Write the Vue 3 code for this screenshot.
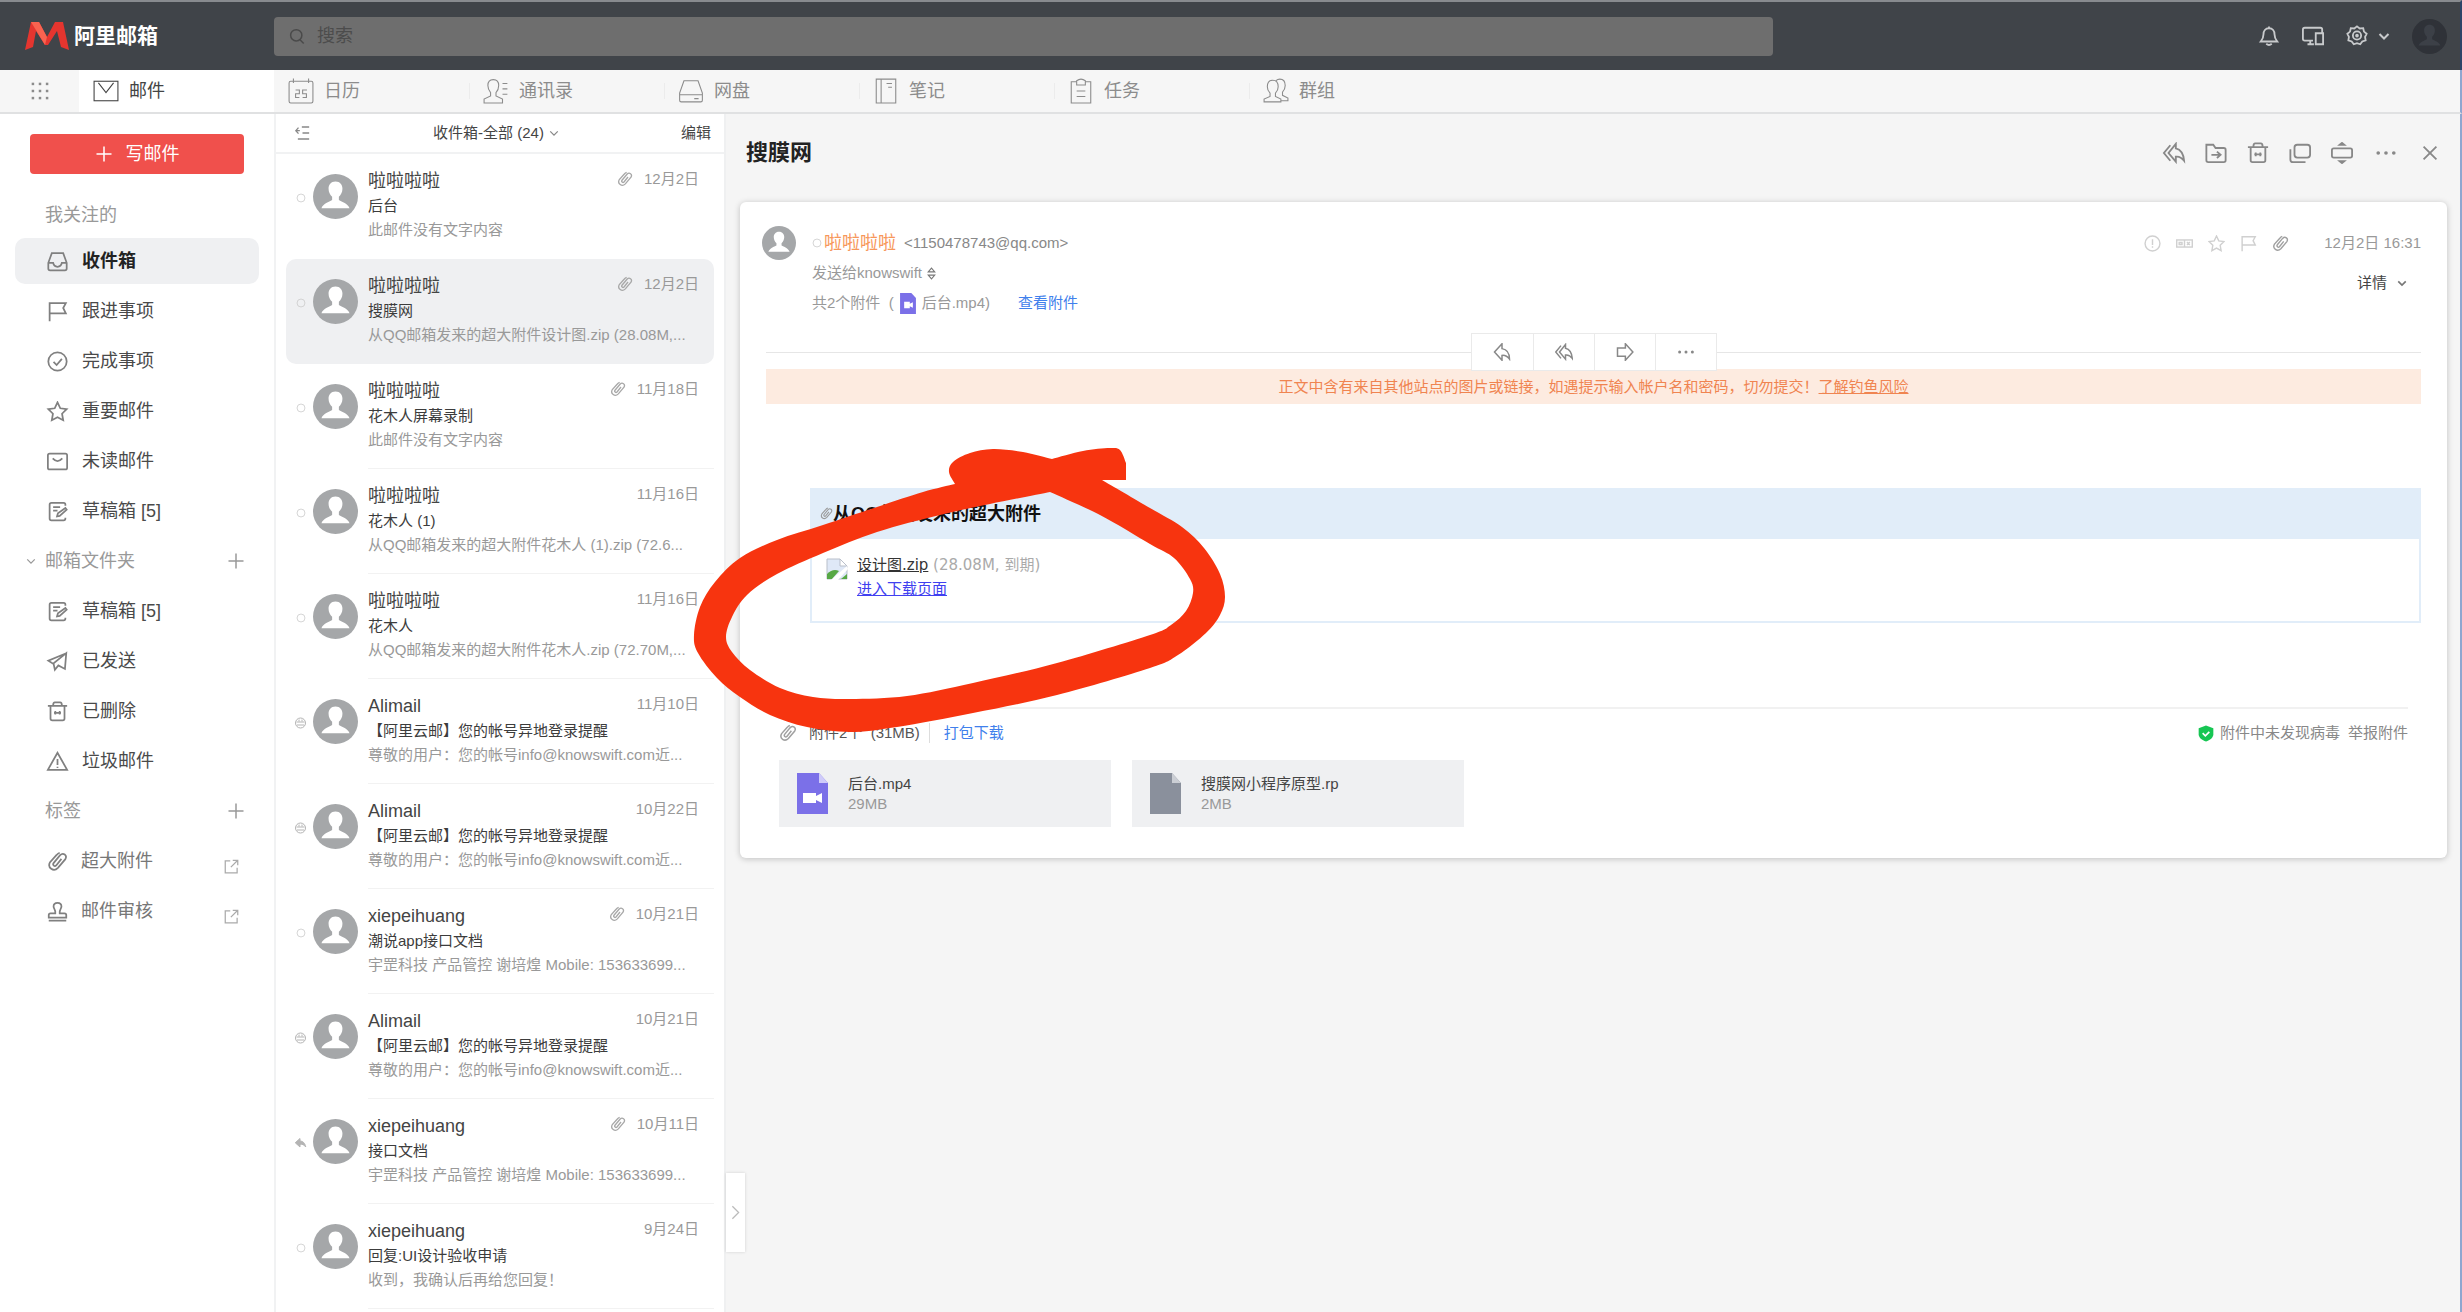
<script setup>
import { h } from 'vue'

const icons = {
  search: '<circle cx="11" cy="11" r="7.5"/><path d="M16 17l5 5"/>',
  grid: '<g fill="currentColor" stroke="none"><rect x="2" y="2" width="3" height="3"/><rect x="10.500" y="2" width="3" height="3"/><rect x="19" y="2" width="3" height="3"/><rect x="2" y="10.500" width="3" height="3"/><rect x="10.500" y="10.500" width="3" height="3"/><rect x="19" y="10.500" width="3" height="3"/><rect x="2" y="19" width="3" height="3"/><rect x="10.500" y="19" width="3" height="3"/><rect x="19" y="19" width="3" height="3"/></g>',
  mail: '<rect x="1" y="3" width="22" height="18"/><path d="M5 4.500l7 9 7-9"/>',
  calendar: '<rect x="1" y="3" width="22" height="20" rx="1.500"/><path d="M5 0.500v4M19 0.500v4M7 11h3.500v3.500H7V18h3.500M17.500 11h-4v3.500h3.500V18h-3.500"/>',
  contacts: '<path d="M9.500 1.500c-3.500 0-5 2.500-5 5.500 0 2.800 1.200 5 2.500 6.500v3L1 19.500V23h17v-3.500L12 16.500v-3c1.400-1.500 2.500-3.700 2.500-6.500 0-3-1.500-5.500-5-5.500zM18 5h4.500M18 10h4.500M18 15h4.500"/>',
  disk: '<path d="M5.500 2.500h13L22.500 14v6.500q0 1.500-1.500 1.500H3q-1.500 0-1.500-1.500V14zM1.500 15.500h21M15 19h4"/>',
  note: '<path d="M3 1h18v22H3zM7.500 1v22M12.500 5h5M14 8.500h3.500"/>',
  task: '<path d="M8 3.500H3V23h18V3.500h-5M8 2.500q4-3 8 0v4H8zM8 12h8M8 17h8"/>',
  group: '<path d="M9 2c-4 0-5 3-5 6 0 2.500 1 4.500 2.500 6v3L1 19.500V22h15.500v-2.500L11.500 17v-3C13 12.500 14 10.500 14 8c0-3-1-6-5-6zM12 2.500c1-1 2-1.500 3.500-1.500 3.500 0 5 3 5 6 0 2.500-1 4.500-2.500 6v3l5 2.500V21h-6"/>',
  inbox: '<path d="M5.500 2.500h13l4 11V20q0 2-2 2h-17q-2 0-2-2v-6.500zM1.500 13.500H7q1 4.500 5 4.500t5-4.500h5.500"/>',
  flag: '<path d="M3 23V2.500h18.500l-3 5.500 3 6H3"/>',
  check: '<circle cx="12" cy="12" r="10.500"/><path d="M7.500 12.500l3.500 3.500 6-7"/>',
  star: '<path d="M12 1.500l3.200 6.800 7.300 1-5.300 5.200 1.300 7.500L12 18.500 5.500 22l1.300-7.500L1.500 9.300l7.300-1z"/>',
  unread: '<rect x="1" y="3" width="22" height="18" rx="2"/><path d="M6.500 8.500q5.500 6 11 0"/>',
  draft: '<path d="M21 5.500V4q0-2-2-2H5Q3 2 3 4v16q0 2 2 2h14q2 0 2-2v-1M7 7h8M7 11h5M11.500 17.500l1-3.500L21 8l1.500 2-8 7z"/>',
  send: '<path d="M22 2.500L1.500 11 7 14.500 22 2.500l-1.500 18-7.500-4-4 5-1.500-7"/>',
  trash: '<path d="M1 5.500h22M4 5.500V20q0 2 2 2h12q2 0 2-2V5.500M7 5q0-3.500 2-3.500h6q2 0 2 3.500M9.500 11.500v4M14.500 11.500v4M8 13.500h8"/>',
  warn: '<path d="M12 2L1 21.500h22zM12 9v7M12 18v1.500"/>',
  clip: '<path d="M16.500 9l-6 7.500c-1.800 1.800-4.500-.5-3-2.700l7.500-9c3.500-3.500 8.500 0 6 4.500l-8.500 10c-5 5-12.500 0-9-6.500L11 4.500c1-1.200 2-2 3.500-2.500"/>',
  stamp: '<path d="M12 2c-3 0-4.500 2-4.500 4.300C7.500 9 10 9.500 9.500 14H4q-2 0-2 2v3h20v-3q0-2-2-2h-5.500c-.5-4.500 2-5 2-7.700C16.500 4 15 2 12 2zM2 22.500h20"/>',
  external: '<path d="M10 3H2v19h19v-8M14 2h8v8M22 2L11 13"/>',
  plus: '<path d="M12 2v20M2 12h20"/>',
  down: '<path d="M3 8l9 9 9-9"/>',
  right: '<path d="M7 2l10 10L7 22"/>',
  updown: '<path d="M6 9l6-7 6 7zM6 15l6 7 6-7z"/>',
  collapse: '<path d="M11 3h11M12 12h10M5 21h17M6 4L2 8.500 6 13M2 8.500h6"/>',
  bell: '<path d="M12 3.500c-4 0-6 3-6 6.500 0 4-1 5.500-3 8h18c-2-2.500-3-4-3-8 0-3.500-2-6.500-6-6.500zM12 1.500v2M9 20.500q3 2.500 6 0"/>',
  devices: '<path d="M22 8V5q0-2-2-2H3Q1 3 1 5v10q0 2 2 2h9M6 21h7M15 9h8v12h-8zM9 17v4"/>',
  gear: '<path d="M12 1.500l3 2.300 3.800-.3.800 3.700 2.900 2.400-1.700 3.400.6 3.700-3.600 1.200L15.500 21 12 19.800 8.500 21l-2.300-3.100-3.600-1.200.6-3.700L1.500 9.600l2.900-2.400.8-3.700 3.800.3z"/><circle cx="12" cy="11.500" r="4.500"/><circle cx="12" cy="11.500" r="1"/>',
  replyall: '<path d="M8 3.500L1 12l7 8.500M14 2L6 12l8 9.500V16c3.500-.5 6 .5 9 4.500-.5-6.500-3-12-9-13.500z"/>',
  moveto: '<path d="M1.500 3H9l2.500 3.500h9q2 0 2 2V20q0 2-2 2h-17q-2 0-2-2zM7 14h9M13 10.500l4 3.500-4 3.500"/>',
  windows: '<rect x="6" y="3" width="17" height="14" rx="3"/><path d="M1.500 8v11q0 3 3 3H18"/>',
  split: '<rect x="1" y="7" width="22" height="10" rx="2"/><path d="M9.500 3L12 1l2.500 2zM9.500 21l2.500 2 2.500-2z"/>',
  dots: '<g fill="currentColor" stroke="none"><circle cx="3.500" cy="12" r="2"/><circle cx="12" cy="12" r="2"/><circle cx="20.500" cy="12" r="2"/></g>',
  close: '<path d="M5 5l14 14M19 5L5 19"/>',
  info: '<circle cx="12" cy="12" r="10.500"/><path d="M12 6v8M12 16v2"/>',
  card: '<rect x="1" y="7" width="22" height="10"/><path d="M12 7v10M4.500 10.500h4v3h-4zM15.500 10l4 4M19.500 10l-4 4"/>',
  reply: '<path d="M12 1L2 12l10 11v-6.500c4-.5 7 1 10 5C22 12.500 18.500 8.500 12 7.500z"/>',
  forward: '<path d="M12.500 1L22.500 12l-10 11v-5.500H2v-11h10.500z"/>',
  circle: '<circle cx="12" cy="12" r="9.500"/>',
  system: '<circle cx="12" cy="12" r="10"/><path d="M4 10h16M5 16h14M9 5v4M15 5v4"/>',
  replied: '<path fill="currentColor" d="M11 3L1.500 11.500 11 20v-5.500c5-.5 8 1 11.500 5.500C21 12 17 8.500 11 8z"/>',
  user: '<circle cx="12" cy="12" r="12" fill="currentColor" stroke="none"/><path class="person" stroke="none" d="M12 4c-2.500 0-3.700 1.800-3.700 3.800 0 1.800.8 3.300 1.900 4.300v1.700c-1.700 1-4.700 1.800-5.700 4.400h15c-1-2.600-4-3.400-5.700-4.400v-1.700c1.100-1 1.900-2.500 1.900-4.300C15.700 5.800 14.500 4 12 4z"/>',
  shield: '<path fill="#17c653" stroke="none" d="M12 0l11 4v9c0 5-5 9-11 11C6 22 1 18 1 13V4z"/><path stroke="#fff" stroke-width="2.500" d="M7 11.500l4 4 6-6"/>',
}

const Icon = (props) =>
  h('svg', { class: 'icon', viewBox: '0 0 24 24', 'aria-hidden': 'true', innerHTML: icons[props.name] })
Icon.props = ['name']

const tabs = [
  { icon: 'mail', label: '邮件', active: true },
  { icon: 'calendar', label: '日历' },
  { icon: 'contacts', label: '通讯录' },
  { icon: 'disk', label: '网盘' },
  { icon: 'note', label: '笔记' },
  { icon: 'task', label: '任务' },
  { icon: 'group', label: '群组' },
]

const focusFolders = [
  { icon: 'inbox', label: '收件箱', active: true },
  { icon: 'flag', label: '跟进事项' },
  { icon: 'check', label: '完成事项' },
  { icon: 'star', label: '重要邮件' },
  { icon: 'unread', label: '未读邮件' },
  { icon: 'draft', label: '草稿箱 [5]' },
]
const mailFolders = [
  { icon: 'draft', label: '草稿箱 [5]' },
  { icon: 'send', label: '已发送' },
  { icon: 'trash', label: '已删除' },
  { icon: 'warn', label: '垃圾邮件' },
]
const extras = [
  { icon: 'clip', label: '超大附件' },
  { icon: 'stamp', label: '邮件审核' },
]

const alert = '【阿里云邮】您的帐号异地登录提醒'
const alertText = '尊敬的用户：您的帐号info@knowswift.com近...'
const signature = '宇罡科技 产品管控 谢培煌 Mobile: 153633699...'
const mails = [
  { from: '啦啦啦啦', subject: '后台', text: '此邮件没有文字内容', date: '12月2日', clip: true, state: 'circle' },
  { from: '啦啦啦啦', subject: '搜膜网', text: '从QQ邮箱发来的超大附件设计图.zip (28.08M,...', date: '12月2日', clip: true, state: 'circle', active: true },
  { from: '啦啦啦啦', subject: '花木人屏幕录制', text: '此邮件没有文字内容', date: '11月18日', clip: true, state: 'circle' },
  { from: '啦啦啦啦', subject: '花木人 (1)', text: '从QQ邮箱发来的超大附件花木人 (1).zip (72.6...', date: '11月16日', state: 'circle' },
  { from: '啦啦啦啦', subject: '花木人', text: '从QQ邮箱发来的超大附件花木人.zip (72.70M,...', date: '11月16日', state: 'circle' },
  { from: 'Alimail', subject: alert, text: alertText, date: '11月10日', state: 'system' },
  { from: 'Alimail', subject: alert, text: alertText, date: '10月22日', state: 'system' },
  { from: 'xiepeihuang', subject: '潮说app接口文档', text: signature, date: '10月21日', clip: true, state: 'circle' },
  { from: 'Alimail', subject: alert, text: alertText, date: '10月21日', state: 'system' },
  { from: 'xiepeihuang', subject: '接口文档', text: signature, date: '10月11日', clip: true, state: 'replied' },
  { from: 'xiepeihuang', subject: '回复:UI设计验收申请', text: '收到，我确认后再给您回复！', date: '9月24日', state: 'circle' },
]

const tools = [
  ['replyall', '回复全部'],
  ['moveto', '移动到'],
  ['trash', '删除'],
  ['windows', '新窗口打开'],
  ['split', '布局'],
  ['dots', '更多'],
  ['close', '关闭'],
]
const quick = [
  ['reply', '回复'],
  ['replyall', '回复全部'],
  ['forward', '转发'],
  ['dots', '更多'],
]

/* Smooth curve through a list of points, each run starting at a corner. */
const curve = (runs) => {
  let d = `M${runs[0][0]}`
  for (const p of runs) {
    for (let i = 0; i < p.length - 1; i++) {
      const a = p[i - 1] || p[i]
      const b = p[i]
      const c = p[i + 1]
      const e = p[i + 2] || c
      d += `C${b[0] + (c[0] - a[0]) / 6} ${b[1] + (c[1] - a[1]) / 6} ${c[0] - (e[0] - b[0]) / 6} ${c[1] - (e[1] - b[1]) / 6} ${c}`
    }
  }
  return d + 'Z'
}
const marker =
  curve([
    [[265, 39], [259, 27], [263, 17], [280, 8], [303, 4], [333, 7], [362, 14]],
    [[362, 14], [393, 6], [420, 3], [430, 5], [436, 18]],
    [[436, 18], [436, 35]],
    [[436, 35], [412, 35]],
    [[412, 35], [460, 63], [492, 82], [514, 103], [530, 129], [535, 152], [530, 170], [516, 188], [488, 210], [460, 223], [367, 250], [283, 268], [207, 282], [160, 287], [117, 282], [80, 270], [50, 252], [27, 233], [8, 208], [4, 190], [10, 162], [25, 137], [50, 113], [87, 95], [133, 80], [187, 62], [233, 47], [265, 39]],
  ]) +
  curve([
    [[360, 47], [410, 70], [460, 99], [484, 113], [500, 134], [503, 148], [496, 166], [481, 180], [460, 190], [367, 218], [283, 238], [217, 251], [160, 254], [123, 252], [90, 243], [60, 225], [42, 207], [36, 192], [42, 172], [57, 150], [87, 129], [133, 108], [187, 87], [250, 70], [300, 59], [360, 47]],
  ])
</script>

<template>
  <div class="app">
    <header class="topbar">
      <a class="brand" href="#">
        <svg class="logo" viewBox="0 0 44 28" aria-hidden="true">
          <path fill="#e5352f" d="M6 0h8l8 15 8-15h8l6 28-8-3-4-16-9 14h-3L11 9 8 25l-8 3z" />
          <path fill="#f96350" d="M6 0h8l8 15-2 8z" />
        </svg>
        <span>阿里邮箱</span>
      </a>
      <label class="search">
        <Icon name="search" />
        <input type="text" placeholder="搜索" aria-label="搜索" />
      </label>
      <div class="account">
        <button aria-label="通知"><Icon name="bell" /></button>
        <button aria-label="客户端"><Icon name="devices" /></button>
        <button class="settings" aria-label="设置"><Icon name="gear" /><Icon name="down" class="tiny" /></button>
        <button class="me" aria-label="账户"><Icon name="user" /></button>
      </div>
    </header>

    <nav class="tabs">
      <button class="apps" aria-label="应用"><Icon name="grid" /></button>
      <a v-for="t in tabs" :key="t.label" href="#" class="tab" :class="{ active: t.active }">
        <Icon :name="t.icon" /><span>{{ t.label }}</span>
      </a>
    </nav>

    <div class="body">
      <aside class="sidebar">
        <button class="compose"><Icon name="plus" />写邮件</button>
        <h2 class="group first">我关注的</h2>
        <a v-for="f in focusFolders" :key="f.label" href="#" class="folder" :class="{ active: f.active }">
          <Icon :name="f.icon" /><span>{{ f.label }}</span>
        </a>
        <h2 class="group"><Icon name="down" class="fold" />邮箱文件夹<button aria-label="新建文件夹"><Icon name="plus" /></button></h2>
        <a v-for="f in mailFolders" :key="f.label" href="#" class="folder">
          <Icon :name="f.icon" /><span>{{ f.label }}</span>
        </a>
        <h2 class="group">标签<button aria-label="新建标签"><Icon name="plus" /></button></h2>
        <a v-for="f in extras" :key="f.label" href="#" class="folder extra">
          <Icon :name="f.icon" /><span>{{ f.label }}</span><Icon name="external" class="ext" />
        </a>
      </aside>

      <section class="list">
        <div class="list-head">
          <button aria-label="收起"><Icon name="collapse" /></button>
          <button class="title">收件箱-全部 (24) <Icon name="down" /></button>
          <button>编辑</button>
        </div>
        <article v-for="(m, i) in mails" :key="i" class="mail" :class="{ active: m.active, plain: i === 0 }">
          <Icon :name="m.state" class="state" :class="m.state" />
          <Icon name="user" class="face" />
          <div class="summary">
            <div class="line">
              <span class="from">{{ m.from }}</span>
              <Icon v-if="m.clip" name="clip" class="clip" />
              <time>{{ m.date }}</time>
            </div>
            <div class="subject">{{ m.subject }}</div>
            <div class="text">{{ m.text }}</div>
          </div>
        </article>
      </section>

      <main class="reader">
        <div class="reader-head">
          <h1>搜膜网</h1>
          <button v-for="[name, label] in tools" :key="name" :aria-label="label" :class="name"><Icon :name="name" /></button>
        </div>

        <div class="card">
          <div class="meta">
            <Icon name="user" class="sender" />
            <div class="who">
              <div class="row"><Icon name="circle" class="dot" /><span class="name">啦啦啦啦</span><span class="addr">&lt;1150478743@qq.com&gt;</span></div>
              <div class="row soft">发送给knowswift<Icon name="updown" class="updown" /></div>
              <div class="row soft">
                共2个附件&nbsp;&nbsp;(
                <svg class="mini" viewBox="0 0 31 41" aria-hidden="true"><path fill="#7b70e8" d="M0 0h22l9 10v31H0z" /><path fill="#fff" d="M8 17h11v4l6-3v11l-6-3v4H8z" /></svg>
                后台.mp4)<a class="view" href="#">查看附件</a>
              </div>
            </div>
            <div class="sent">
              <div class="row marks">
                <Icon name="info" /><Icon name="card" /><Icon name="star" /><Icon name="flag" /><Icon name="clip" class="on" />
                <time>12月2日 16:31</time>
              </div>
              <button class="detail">详情<Icon name="down" /></button>
            </div>
          </div>

          <div class="quick">
            <div class="buttons">
              <button v-for="[name, label] in quick" :key="name" :aria-label="label"><Icon :name="name" /></button>
            </div>
          </div>
          <p class="notice">正文中含有来自其他站点的图片或链接，如遇提示输入帐户名和密码，切勿提交！<a href="#">了解钓鱼风险</a></p>

          <section class="big">
            <h3><Icon name="clip" />从QQ邮箱发来的超大附件</h3>
            <div class="big-file">
              <svg class="broken" viewBox="0 0 22 22" aria-hidden="true">
                <path fill="#dfe8f7" stroke="#b9bfca" d="M1 1h13l7 7v13H1z" />
                <path fill="#fff" stroke="#b9bfca" d="M14 1v7h7z" />
                <path fill="#57a845" d="M1 21v-5q6-6 12-3l-7 8z" />
                <path fill="#fff" d="M5 22L21 8l1 3-10 11z" />
                <path fill="#57a845" d="M15 21l6-5v5z" />
              </svg>
              <div>
                <div class="file-line"><a href="#" class="file-name">设计图.zip</a> (28.08M, 到期)</div>
                <a href="#" class="download">进入下载页面</a>
              </div>
            </div>
          </section>

          <section class="attachments">
            <div class="att-head">
              <Icon name="clip" />
              <span class="count">附件2个&nbsp;&nbsp;(31MB)</span>
              <a href="#">打包下载</a>
              <span class="safe"><Icon name="shield" />附件中未发现病毒</span>
              <button>举报附件</button>
            </div>
            <div class="files">
              <div class="file">
                <svg viewBox="0 0 31 41" aria-hidden="true"><path fill="#7b70e8" d="M0 0h22l9 10v31H0z" /><path fill="#cfcbfa" d="M22 0l9 10h-9z" /><path fill="#fff" d="M6 20h13v3l6-3v10l-6-3v3H6z" /></svg>
                <div><div>后台.mp4</div><small>29MB</small></div>
              </div>
              <div class="file">
                <svg viewBox="0 0 31 41" aria-hidden="true"><path fill="#8a909c" d="M0 0h22l9 10v31H0z" /><path fill="#cbced4" d="M22 0l9 10h-9z" /></svg>
                <div><div>搜膜网小程序原型.rp</div><small>2MB</small></div>
              </div>
            </div>
          </section>
          <svg class="marker" viewBox="0 0 540 296" aria-hidden="true"><path :d="marker" fill="#f7340f" fill-rule="evenodd" /></svg>
        </div>
        <button class="handle" aria-label="展开"><Icon name="right" /></button>
      </main>
    </div>
  </div>
</template>

<style>
body {
  margin: 0;
}
</style>

<style scoped>
.app {
  display: flex;
  flex-direction: column;
  min-height: 100vh;
  font: 15px/20px 'Liberation Sans', 'Noto Sans CJK SC', sans-serif;
  color: #555;
  background: #fff;
}
button {
  padding: 0;
  border: 0;
  background: none;
  color: inherit;
  font: inherit;
}
a {
  color: inherit;
  text-decoration: none;
}
h1,
h2,
h3,
p {
  margin: 0;
}
.icon {
  display: block;
  flex: none;
  width: 24px;
  height: 24px;
  fill: none;
  stroke: currentColor;
  stroke-width: 2;
}
.icon :deep(.person) {
  fill: #fff;
}

.topbar {
  display: flex;
  align-items: center;
  box-sizing: border-box;
  height: 70px;
  padding: 0 13px 0 25px;
  border-top: 2px solid #888b8f;
  border-right: 2px solid #2c4568;
  background: #404449;
}
.brand {
  display: flex;
  align-items: center;
  gap: 5px;
  width: 249px;
  color: #fff;
  font-size: 21px;
  font-weight: bold;
}
.logo {
  width: 44px;
  height: 28px;
}
.search {
  display: flex;
  align-items: center;
  flex: 0 1 1499px;
  box-sizing: border-box;
  height: 39px;
  padding: 0 14px;
  gap: 11px;
  border-radius: 4px;
  background: #6e6e6e;
  color: #4a4a4a;
}
.search .icon {
  width: 18px;
  height: 18px;
}
.search input {
  flex: 1;
  min-width: 0;
  padding: 0;
  border: 0;
  outline: 0;
  background: none;
  color: #fff;
  font: inherit;
  font-size: 18px;
}
.search input::placeholder {
  color: #4c4c4c;
}
.account {
  display: flex;
  align-items: center;
  gap: 22px;
  margin-left: auto;
  color: #c8cacc;
}
.account .icon {
  width: 22px;
  height: 22px;
}
.account .settings {
  display: flex;
  align-items: center;
  gap: 10px;
}
.account .tiny {
  width: 12px;
  height: 12px;
  stroke-width: 4;
}
.account .me .icon {
  width: 35px;
  height: 35px;
  color: #2f3238;
}
.account .me :deep(.person) {
  fill: #3c4047;
}

.tabs {
  display: flex;
  height: 42px;
  border-right: 2px solid #8fa6cf;
  border-bottom: 2px solid #e0e1e2;
  background: #f6f6f6;
  color: #8c8c8c;
  font-size: 18px;
}
.apps {
  display: flex;
  align-items: center;
  width: 79px;
  padding-left: 30px;
}
.apps .icon {
  width: 20px;
  height: 20px;
}
.tab {
  display: flex;
  align-items: center;
  box-sizing: border-box;
  width: 195px;
  padding-left: 14px;
  gap: 10px;
}
.tab .icon {
  width: 26px;
  height: 26px;
  stroke-width: 1;
}
.tab + .tab + .tab {
  background: linear-gradient(#ececec, #ececec) left center / 1px 16px no-repeat;
}
.tab.active {
  background: #fff;
  color: #444;
}

.body {
  display: flex;
  flex: 1;
  border-right: 2px solid #8fa6cf;
}
.sidebar {
  flex: none;
  box-sizing: border-box;
  width: 276px;
  padding-top: 20px;
  border-right: 2px solid #f1f2f3;
  font-size: 18px;
}
.compose {
  display: flex;
  align-items: center;
  justify-content: center;
  gap: 13px;
  width: 214px;
  height: 40px;
  margin: 0 0 18px 30px;
  border-radius: 4px;
  background: #f0504c;
  color: #fff;
}
.compose .icon {
  width: 18px;
  height: 18px;
}
.group {
  display: flex;
  align-items: center;
  position: relative;
  height: 46px;
  margin-bottom: 4px;
  padding: 0 29px 0 45px;
  color: #999;
  font-size: 18px;
  font-weight: normal;
}
.group.first {
  margin-bottom: 0;
}
.group button {
  margin-left: auto;
}
.group button .icon {
  width: 18px;
  height: 18px;
}
.group .fold {
  position: absolute;
  left: 26px;
  width: 10px;
  height: 10px;
  stroke-width: 3;
}
.folder {
  display: flex;
  align-items: center;
  height: 46px;
  margin: 0 15px 4px;
  padding: 0 20px 0 31px;
  gap: 13px;
  border-radius: 10px;
  color: #4a4a4a;
}
.folder .icon {
  width: 23px;
  height: 21px;
  color: #808080;
}
.folder.active {
  background: #eff0f2;
  color: #222;
  font-weight: bold;
}
.folder.extra {
  gap: 12px;
  color: #777;
}
.folder .ext {
  width: 15px;
  height: 15px;
  margin: 10px 0 0 auto;
  color: #aaa;
}

.list {
  flex: none;
  box-sizing: border-box;
  width: 450px;
  border-right: 2px solid #eff0f1;
}
.list-head {
  display: flex;
  align-items: center;
  justify-content: space-between;
  height: 38px;
  padding: 0 13px 0 18px;
  border-bottom: 2px solid #f1f2f3;
  color: #444;
}
.list-head .icon {
  width: 17px;
  height: 16px;
  color: #888;
}
.list-head .title {
  display: flex;
  align-items: center;
  gap: 5px;
}
.list-head .title .icon {
  width: 10px;
  height: 10px;
  stroke-width: 3;
}
.mail {
  display: flex;
  height: 105px;
  margin: 0 10px;
  border-radius: 10px;
}
.mail.active {
  background: #eff0f2;
}
.state {
  width: 10px;
  height: 10px;
  margin: 39px 7px 0 10px;
  color: #ccc;
}
.state.system,
.state.replied {
  width: 13px;
  height: 12px;
  margin: 38px 6px 0 8px;
  color: #b4b4b4;
}
.face {
  width: 45px;
  height: 45px;
  margin-top: 20px;
  color: #a5a7a9;
}
.summary {
  flex: 1;
  min-width: 0;
  box-sizing: border-box;
  margin-left: 10px;
  padding: 14px 15px 0 0;
  border-bottom: 1px solid #f2f2f2;
}
.mail.active .summary,
.mail.plain .summary {
  border-color: transparent;
}
.line {
  display: flex;
  align-items: center;
  height: 26px;
  color: #999;
}
.from {
  flex: 1;
  color: #444;
  font-size: 18px;
}
.line .clip {
  width: 16px;
  height: 16px;
  margin: -4px 11px 0 0;
  color: #a8a8a8;
}
.line time {
  margin-top: -4px;
}
.subject,
.text {
  height: 24px;
  line-height: 24px;
  white-space: nowrap;
  overflow: hidden;
}
.subject {
  color: #3c3c3c;
}
.text {
  color: #999;
}

.reader {
  position: relative;
  flex: 1;
  min-width: 0;
  padding: 0 13px 0 14px;
  background: #f5f5f5;
}
.reader-head {
  display: flex;
  align-items: center;
  gap: 18px;
  height: 78px;
  padding: 0 5px 10px 6px;
  color: #888;
}
.reader-head h1 {
  flex: 1;
  color: #222;
  font-size: 22px;
  line-height: 28px;
}
.reader-head .icon {
  width: 24px;
  height: 22px;
}
.reader-head .dots,
.reader-head .close {
  margin-left: 2px;
}
.card {
  position: relative;
  padding: 26px 26px 31px;
  border-radius: 6px;
  background: #fff;
  box-shadow: 0 1px 6px rgba(0, 0, 0, 0.22);
}
.meta {
  display: flex;
  height: 105px;
}
.sender {
  width: 34px;
  height: 34px;
  margin: -2px 16px 0 -4px;
  color: #a5a7a9;
}
.who {
  flex: 1;
}
.row {
  display: flex;
  align-items: center;
  height: 30px;
}
.row.soft {
  color: #999;
}
.dot {
  width: 10px;
  height: 10px;
  margin-right: 2px;
  color: #ccc;
}
.name {
  margin-right: 8px;
  color: #f7975a;
  font-size: 18px;
}
.addr {
  color: #888;
}
.updown {
  width: 13px;
  height: 13px;
  margin-left: 3px;
  color: #777;
}
.mini {
  width: 16px;
  height: 21px;
  margin: 0 6px;
}
.view {
  margin-left: 28px;
  color: #4080ec;
}
.marks {
  gap: 15px;
  color: #d0d0d0;
}
.marks .icon {
  width: 17px;
  height: 17px;
}
.marks .on {
  color: #a0a0a0;
}
.marks time {
  margin-left: 20px;
  color: #999;
}
.detail {
  display: flex;
  align-items: center;
  gap: 10px;
  height: 50px;
  margin: 0 14px 0 auto;
  color: #444;
}
.detail .icon {
  width: 10px;
  height: 10px;
  color: #777;
  stroke-width: 4;
}
.quick {
  display: flex;
  align-items: center;
  position: relative;
  z-index: 1;
  height: 38px;
}
.quick::before,
.quick::after {
  content: '';
  flex: 1;
  height: 1px;
  background: #e6e6e6;
}
.buttons {
  display: flex;
  height: 36px;
  border: 1px solid #eaeaea;
  background: #fff;
  color: #888;
}
.buttons button {
  display: flex;
  align-items: center;
  justify-content: center;
  width: 61px;
}
.buttons button + button {
  border-left: 1px solid #eaeaea;
}
.buttons .icon {
  width: 18px;
  height: 18px;
}
.notice {
  margin-top: -2px;
  background: #fdebe0;
  color: #f08450;
  line-height: 35px;
  text-align: center;
}
.notice a {
  text-decoration: underline;
}
.big {
  margin: 84px 0 84px 44px;
}
.big h3 {
  display: flex;
  align-items: center;
  height: 51px;
  padding-left: 10px;
  background: #e1edf9;
  color: #111;
  font-size: 18px;
}
.big h3 .icon {
  width: 13px;
  height: 15px;
  color: #999;
}
.big-file {
  display: flex;
  gap: 9px;
  box-sizing: border-box;
  height: 84px;
  padding: 14px;
  border: 2px solid #e1edf9;
  border-top: 0;
  color: #aaa;
  font-family: 'DejaVu Sans', 'Noto Sans CJK SC', sans-serif;
  line-height: 24px;
}
.broken {
  width: 22px;
  height: 22px;
  margin-top: 5px;
}
.file-line {
  height: 24px;
}
.file-name {
  color: #333;
  text-decoration: underline;
}
.download {
  color: #4040f0;
  text-decoration: underline;
}
.attachments {
  margin: 0 13px;
  border-top: 2px solid #f1f1f1;
}
.att-head {
  display: flex;
  align-items: center;
  height: 48px;
  margin-bottom: 3px;
  color: #888;
}
.att-head > .icon {
  width: 18px;
  height: 18px;
  margin-right: 12px;
  color: #a0a0a0;
}
.att-head a {
  padding-left: 14px;
  border-left: 1px solid #ddd;
  color: #4080ec;
}
.count {
  margin-right: 9px;
  color: #555;
}
.safe {
  display: flex;
  align-items: center;
  gap: 6px;
  margin: 0 8px 0 auto;
}
.safe .icon {
  width: 16px;
  height: 17px;
}
.files {
  display: flex;
  gap: 21px;
}
.file {
  display: flex;
  align-items: center;
  flex: 0 1 332px;
  box-sizing: border-box;
  height: 67px;
  padding-left: 18px;
  gap: 20px;
  background: #eff0f2;
  color: #444;
}
.file svg {
  width: 31px;
  height: 41px;
}
.file small {
  color: #999;
  font-size: 15px;
}
.marker {
  position: absolute;
  left: -50px;
  top: 243px;
  z-index: 2;
  width: 540px;
  height: 296px;
  pointer-events: none;
}
.handle {
  display: flex;
  align-items: center;
  justify-content: center;
  position: absolute;
  left: 0;
  bottom: 60px;
  width: 19px;
  height: 79px;
  background: #fff;
  box-shadow: 0 0 3px rgba(0, 0, 0, 0.15);
  color: #bbb;
}
.handle .icon {
  width: 15px;
  height: 17px;
}
</style>
